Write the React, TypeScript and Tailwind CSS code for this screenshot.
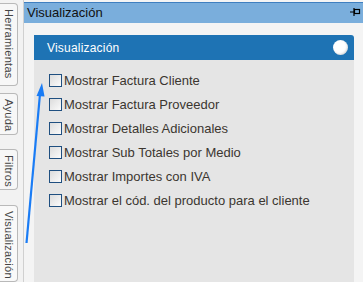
import React from "react"

const opciones = [
  "Mostrar Factura Cliente",
  "Mostrar Factura Proveedor",
  "Mostrar Detalles Adicionales",
  "Mostrar Sub Totales por Medio",
  "Mostrar Importes con IVA",
  "Mostrar el cód. del producto para el cliente",
]

function Tab({ label, className }: { label: string; className: string }) {
  return (
    <div
      className={`w-[18px] border border-l-0 border-[#b9b9b9] rounded-r-[4px] bg-[#f7f7f7] flex justify-center pt-[5px] ${className}`}
    >
      <span className="[writing-mode:vertical-rl] text-[11px] text-[#444] leading-none tracking-[0.3px]">{label}</span>
    </div>
  )
}

export default function App() {
  return (
    <div
      className="relative w-[363px] h-[282px] overflow-hidden bg-[#f4f4f4] flex"
      style={{ fontFamily: '"Liberation Sans", Arial, sans-serif' }}
    >
      {/* barra de pestañas lateral */}
      <div className="w-[23px] shrink-0 bg-[#f2f2f2] flex flex-col pt-[3px] gap-[7px]">
        <Tab label="Herramientas" className="h-[86px]" />
        <Tab label="Ayuda" className="h-[43px] mt-[0px]" />
        <Tab label="Filtros" className="h-[42px] mt-[7px]" />
        <Tab label="Visualización" className="h-[80px] mt-[8px] bg-[#f9f9f9]" />
      </div>

      {/* panel principal */}
      <div className="flex-1 flex flex-col border-l border-[#d0d0d0]">
        <div className="mt-[2px] h-[21px] bg-[#7aaedc] border-t border-[#3f7fc0] flex items-center justify-between pl-[3px] pr-[2px]">
          <span className="text-[13px] text-[#111]">Visualización</span>
          <svg width="12" height="10" viewBox="0 0 12 10" className="mb-[2px]">
            <path d="M1 5h4M5 1v8" stroke="#000" strokeWidth="1.2" fill="none" />
            <rect x="5.5" y="2.5" width="5" height="4" stroke="#000" strokeWidth="1.2" fill="none" />
          </svg>
        </div>

        <div className="flex-1 pt-[12px] pl-[10px] pr-[9px]">
          <div className="h-full flex flex-col">
            <div className="h-[25px] bg-[#1e73b4] rounded-tr-[3px] flex items-center justify-between pl-[13px] pr-[6px]">
              <span className="text-[12px] text-white tracking-[0.2px]">Visualización</span>
              <div className="w-[15px] h-[15px] rounded-full bg-white shadow-[inset_-1px_-1px_2px_rgba(0,0,0,0.15)]" />
            </div>
            <div className="flex-1 bg-[#e5e5e5] pt-[14px] pl-[15px] flex flex-col gap-[11px]">
              {opciones.map((o) => (
                <label key={o} className="flex items-center gap-[2px] h-[13px]">
                  <span className="w-[13px] h-[13px] border border-[#1f4f80] bg-gradient-to-br from-[#dcdcdc] to-[#fbfbfb] shrink-0" />
                  <span className="text-[13px] text-[#3b3630] leading-none">{o}</span>
                </label>
              ))}
            </div>
          </div>
        </div>
      </div>

      {/* flecha de anotación */}
      <svg className="absolute left-0 top-0 pointer-events-none" width="363" height="282">
        <line x1="26.5" y1="243" x2="40" y2="94" stroke="#1a7cf5" strokeWidth="2.2" />
        <path d="M42 83 L36.5 96 L44.5 96.5 Z" fill="#1a7cf5" />
      </svg>
    </div>
  )
}
